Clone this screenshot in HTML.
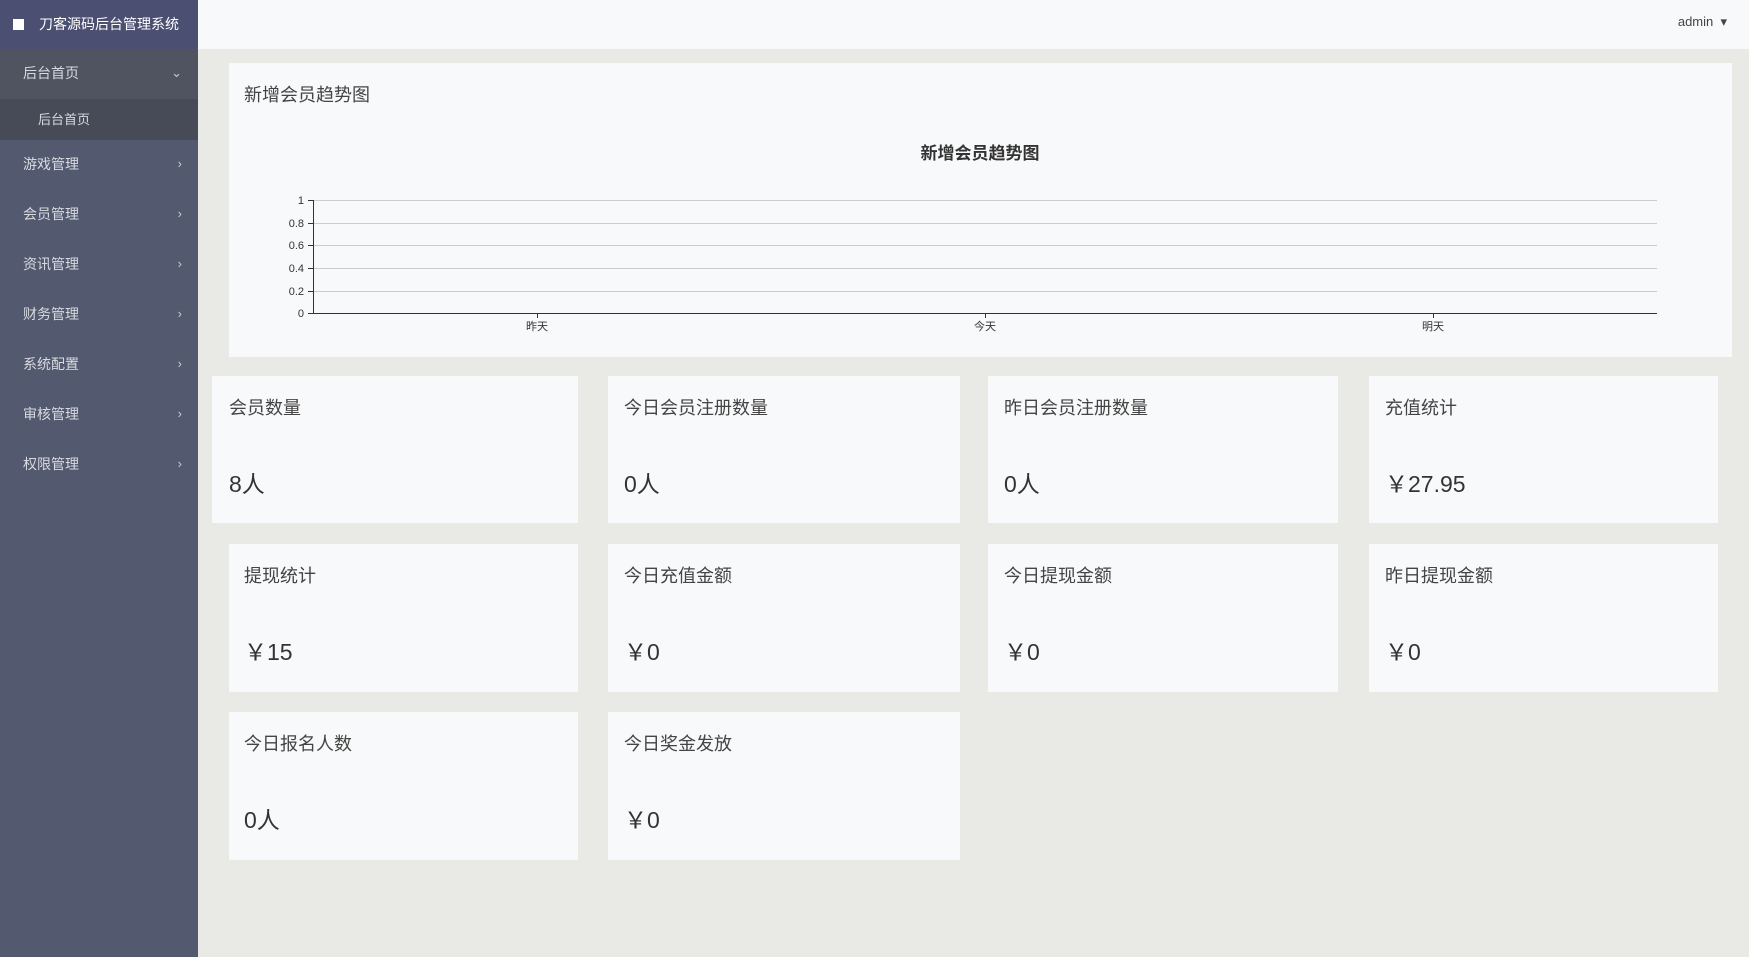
<!DOCTYPE html>
<html><head><meta charset="utf-8"><style>
*{margin:0;padding:0;box-sizing:border-box}
body{width:1749px;height:957px;overflow:hidden;background:#e9e9e5;font-family:"Liberation Sans","Noto Sans CJK SC",sans-serif;position:relative;color:#333}
.side{position:absolute;left:0;top:0;width:198px;height:957px;background:#535a6f}
.logo{height:49px;background:#4b4f71;color:#fff;font-size:14px;line-height:49px;padding-left:13px}
.logo i{display:inline-block;width:11px;height:11px;background:#fff;margin-right:15px;vertical-align:-1px}
.mi{height:50px;line-height:48px;color:#d8dae0;font-size:14px;padding-left:23px;position:relative}
.mi b{position:absolute;right:16px;top:0;font-weight:normal;font-size:13px;color:#c8cad2}
.sub{height:41px;line-height:41px;background:#474a57;color:#d8dae0;font-size:13px;padding-left:38px}
.top{position:absolute;left:198px;top:0;right:0;height:49px;background:#f8f9fa}
.adm{position:absolute;right:22px;top:14px;font-size:13px;color:#444}
.card{position:absolute;background:#f8f9fa}
.t{position:absolute;font-size:18px;color:#444}
.v{position:absolute;font-size:23px;color:#333}
</style></head><body>
<div class="side">
<div class="logo"><i></i>刀客源码后台管理系统</div>
<div class="mi" style="background:#505360">后台首页<b>⌄</b></div>
<div class="sub">后台首页</div>
<div class="mi">游戏管理<b>›</b></div>
<div class="mi">会员管理<b>›</b></div>
<div class="mi">资讯管理<b>›</b></div>
<div class="mi">财务管理<b>›</b></div>
<div class="mi">系统配置<b>›</b></div>
<div class="mi">审核管理<b>›</b></div>
<div class="mi">权限管理<b>›</b></div>
</div>
<div class="top"><span class="adm">admin &nbsp;▾</span></div>

<div class="card" style="left:229px;top:63px;width:1503px;height:294px">
<div class="t" style="left:15px;top:18px">新增会员趋势图</div>
</div>
<svg style="position:absolute;left:0;top:0" width="1749" height="400">
<text x="980" y="159" text-anchor="middle" font-size="17" font-weight="bold" fill="#333" font-family="Liberation Sans,Noto Sans CJK SC,sans-serif">新增会员趋势图</text>
<g stroke="#ccc" stroke-width="1">
<line x1="313" y1="200.5" x2="1657" y2="200.5"/><line x1="313" y1="223.5" x2="1657" y2="223.5"/><line x1="313" y1="245.5" x2="1657" y2="245.5"/><line x1="313" y1="268.5" x2="1657" y2="268.5"/><line x1="313" y1="291.5" x2="1657" y2="291.5"/>
</g>
<g stroke="#333" stroke-width="1">
<line x1="313.5" y1="200" x2="313.5" y2="314"/><line x1="313" y1="313.5" x2="1657" y2="313.5"/>
<line x1="308" y1="200.5" x2="313" y2="200.5"/><line x1="308" y1="223.5" x2="313" y2="223.5"/><line x1="308" y1="245.5" x2="313" y2="245.5"/><line x1="308" y1="268.5" x2="313" y2="268.5"/><line x1="308" y1="291.5" x2="313" y2="291.5"/><line x1="308" y1="313.5" x2="313" y2="313.5"/>
<line x1="537.5" y1="313" x2="537.5" y2="318"/><line x1="985.5" y1="313" x2="985.5" y2="318"/><line x1="1433.5" y1="313" x2="1433.5" y2="318"/>
</g>
<g font-size="11" fill="#333" font-family="Liberation Sans,Noto Sans CJK SC,sans-serif" text-anchor="end">
<text x="304" y="204">1</text><text x="304" y="227">0.8</text><text x="304" y="249">0.6</text><text x="304" y="272">0.4</text><text x="304" y="295">0.2</text><text x="304" y="317">0</text>
</g>
<g font-size="11" fill="#333" font-family="Liberation Sans,Noto Sans CJK SC,sans-serif" text-anchor="middle">
<text x="537" y="330">昨天</text><text x="985" y="330">今天</text><text x="1433" y="330">明天</text>
</g>
</svg>

<div class="card" style="left:212px;top:376px;width:366px;height:147px"><div class="t" style="left:17px;top:18px">会员数量</div><div class="v" style="left:17px;top:89px">8人</div></div>
<div class="card" style="left:608px;top:376px;width:352px;height:147px"><div class="t" style="left:16px;top:18px">今日会员注册数量</div><div class="v" style="left:16px;top:89px">0人</div></div>
<div class="card" style="left:988px;top:376px;width:350px;height:147px"><div class="t" style="left:16px;top:18px">昨日会员注册数量</div><div class="v" style="left:16px;top:89px">0人</div></div>
<div class="card" style="left:1369px;top:376px;width:349px;height:147px"><div class="t" style="left:16px;top:18px">充值统计</div><div class="v" style="left:16px;top:89px">￥27.95</div></div>

<div class="card" style="left:229px;top:544px;width:349px;height:148px"><div class="t" style="left:15px;top:18px">提现统计</div><div class="v" style="left:15px;top:89px">￥15</div></div>
<div class="card" style="left:608px;top:544px;width:352px;height:148px"><div class="t" style="left:16px;top:18px">今日充值金额</div><div class="v" style="left:16px;top:89px">￥0</div></div>
<div class="card" style="left:988px;top:544px;width:350px;height:148px"><div class="t" style="left:16px;top:18px">今日提现金额</div><div class="v" style="left:16px;top:89px">￥0</div></div>
<div class="card" style="left:1369px;top:544px;width:349px;height:148px"><div class="t" style="left:16px;top:18px">昨日提现金额</div><div class="v" style="left:16px;top:89px">￥0</div></div>

<div class="card" style="left:229px;top:712px;width:349px;height:148px"><div class="t" style="left:15px;top:18px">今日报名人数</div><div class="v" style="left:15px;top:89px">0人</div></div>
<div class="card" style="left:608px;top:712px;width:352px;height:148px"><div class="t" style="left:16px;top:18px">今日奖金发放</div><div class="v" style="left:16px;top:89px">￥0</div></div>
</body></html>
